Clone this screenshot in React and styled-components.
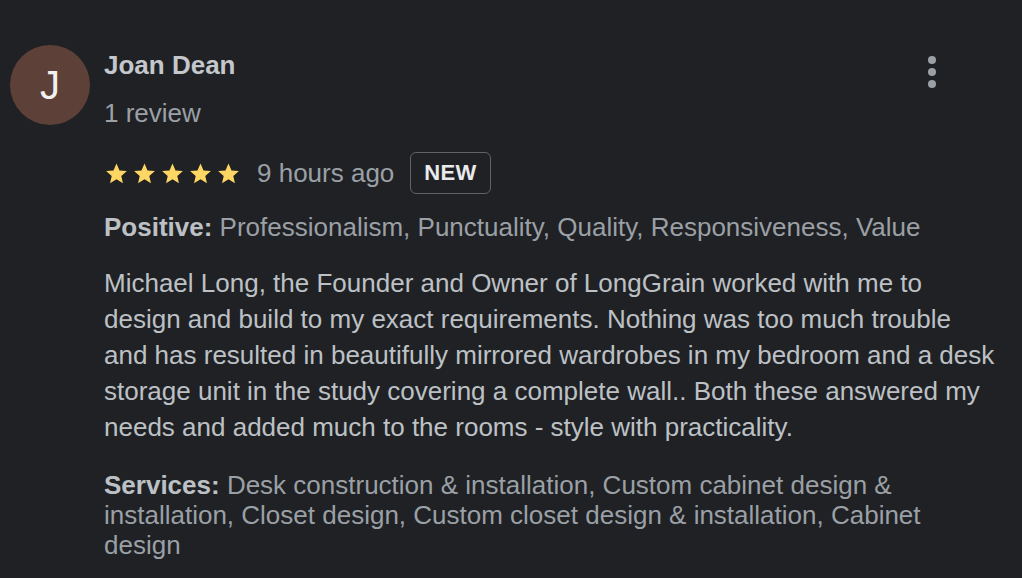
import React from 'react';
import styled, { createGlobalStyle } from 'styled-components';

const GlobalStyle = createGlobalStyle`
  html, body {
    margin: 0;
    padding: 0;
    background: #202124;
  }
  body {
    font-family: Arial, "Liberation Sans", Helvetica, sans-serif;
  }
  button {
    font-family: inherit;
  }
`;

const Star = () => (
  <svg width="25" height="25" viewBox="0 0 24 24">
    <path
      fill="#fdd663"
      d="M12 2.5l2.9 6.6 7.1.6-5.4 4.7 1.6 7-6.2-3.8-6.2 3.8 1.6-7L2 9.7l7.1-.6z"
    />
  </svg>
);

const App = () => {
  return (
    <>
      <GlobalStyle />
      <StyledReview>
        <Avatar>J</Avatar>

        <Content>
          <Header>
            <div>
              <Name>Joan Dean</Name>
              <Meta>1 review</Meta>
            </div>
            <MoreButton aria-label="More">
              <span />
              <span />
              <span />
            </MoreButton>
          </Header>

          <RatingRow>
            <Stars>
              <Star />
              <Star />
              <Star />
              <Star />
              <Star />
            </Stars>
            <Meta>9 hours ago</Meta>
            <Badge>NEW</Badge>
          </RatingRow>

          <Line>
            <strong>Positive:</strong> Professionalism, Punctuality, Quality, Responsiveness, Value
          </Line>

          <Body>
            Michael Long, the Founder and Owner of LongGrain worked with me to<br />
            design and build to my exact requirements. Nothing was too much trouble<br />
            and has resulted in beautifully mirrored wardrobes in my bedroom and a desk<br />
            storage unit in the study covering a complete wall.. Both these answered my<br />
            needs and added much to the rooms - style with practicality.
          </Body>

          <Line $compact>
            <strong>Services:</strong> Desk construction &amp; installation, Custom cabinet design &amp;<br />
            installation, Closet design, Custom closet design &amp; installation, Cabinet<br />
            design
          </Line>
        </Content>
      </StyledReview>
    </>
  );
};

const StyledReview = styled.article`
  display: flex;
  align-items: flex-start;
  gap: 14px;
  padding: 45px 0 0 10px;
  width: 1012px;
`;

const Avatar = styled.div`
  flex: none;
  width: 80px;
  height: 80px;
  border-radius: 50%;
  background: #5d4037;
  color: #f1f1f1;
  display: flex;
  align-items: center;
  justify-content: center;
  font-size: 40px;
  font-weight: 400;
`;

const Content = styled.div`
  flex: 1;
  min-width: 0;
`;

const Header = styled.header`
  display: flex;
  justify-content: space-between;
  align-items: flex-start;
`;

const Name = styled.h2`
  margin: 5px 0 0;
  font-size: 26px;
  line-height: 30px;
  font-weight: 700;
  color: #c4c7cb;
`;

const Meta = styled.span`
  display: block;
  margin-top: 18px;
  font-size: 26px;
  line-height: 30px;
  color: #9aa0a6;
`;

const MoreButton = styled.button`
  margin: 11px 86px 0 0;
  padding: 0;
  border: none;
  background: transparent;
  display: flex;
  flex-direction: column;
  gap: 4px;

  span {
    width: 8px;
    height: 8px;
    border-radius: 50%;
    background: #9aa0a6;
  }
`;

const RatingRow = styled.div`
  display: flex;
  align-items: center;
  margin-top: 23px;
  height: 44px;

  ${Meta} {
    margin: 0 16px 0 16px;
  }
`;

const Stars = styled.div`
  display: flex;
  gap: 3px;
`;

const Badge = styled.span`
  border: 1.5px solid #5f6368;
  border-radius: 6px;
  padding: 0 13px;
  height: 42px;
  box-sizing: border-box;
  display: flex;
  align-items: center;
  font-size: 22px;
  font-weight: 700;
  color: #e8eaed;
  letter-spacing: 0.3px;
`;

const Line = styled.p`
  margin: ${p => (p.$compact ? '25px 0 0' : '14px 0 0')};
  font-size: 26px;
  line-height: ${p => (p.$compact ? '30px' : '36px')};
  color: #9aa0a6;

  strong {
    color: #bdc1c6;
    font-weight: 700;
  }
`;

const Body = styled.p`
  margin: 20px 0 0;
  font-size: 26px;
  line-height: 36px;
  color: #bdc1c6;
`;

export default App;
